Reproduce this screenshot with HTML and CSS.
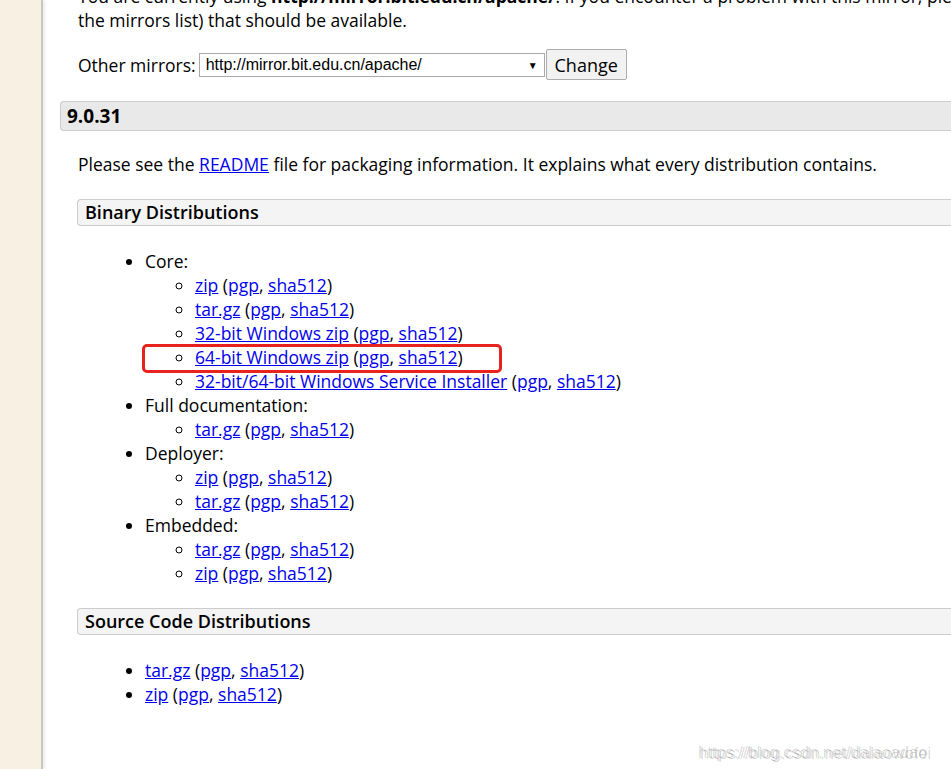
FILE: index.html
```html
<!DOCTYPE html>
<html lang="en">

<head>
    <meta charset="UTF-8">
    <meta name="viewport" content="width=device-width, initial-scale=1.0">
    <title>Apache Tomcat® - Apache Tomcat 9 Software Downloads</title>
    <link rel="stylesheet" href="styles.css">
</head>

<body>
    <div class="page">
        <div class="side"></div>
        <div class="content">
            <p class="intro">You are currently using <b>http://mirror.bit.edu.cn/apache/</b>. If you encounter a problem with this mirror, please select another mirror. If all mirrors are failing, there are <i>backup</i> mirrors (at the end of<br>the mirrors list) that should be available.</p>

            <form class="mirrors">
                <span>Other mirrors:</span>
                <div class="select-wrap">
                    <select>
                        <option>http://mirror.bit.edu.cn/apache/</option>
                    </select>
                </div>
                <input type="button" value="Change" class="btn">
            </form>

            <h3 class="version">9.0.31</h3>

            <div class="section">
                <p>Please see the <a href="#">README</a> file for packaging information. It explains what every distribution contains.</p>

                <h4 class="sub">Binary Distributions</h4>
                <ul class="dist">
                    <li>Core:
                        <ul>
                            <li><a href="#">zip</a> (<a href="#">pgp</a>, <a href="#">sha512</a>)</li>
                            <li><a href="#">tar.gz</a> (<a href="#">pgp</a>, <a href="#">sha512</a>)</li>
                            <li><a href="#">32-bit Windows zip</a> (<a href="#">pgp</a>, <a href="#">sha512</a>)</li>
                            <li class="marked"><a href="#">64-bit Windows zip</a> (<a href="#">pgp</a>, <a href="#">sha512</a>)</li>
                            <li><a href="#">32-bit/64-bit Windows Service Installer</a> (<a href="#">pgp</a>, <a href="#">sha512</a>)</li>
                        </ul>
                    </li>
                    <li>Full documentation:
                        <ul>
                            <li><a href="#">tar.gz</a> (<a href="#">pgp</a>, <a href="#">sha512</a>)</li>
                        </ul>
                    </li>
                    <li>Deployer:
                        <ul>
                            <li><a href="#">zip</a> (<a href="#">pgp</a>, <a href="#">sha512</a>)</li>
                            <li><a href="#">tar.gz</a> (<a href="#">pgp</a>, <a href="#">sha512</a>)</li>
                        </ul>
                    </li>
                    <li>Embedded:
                        <ul>
                            <li><a href="#">tar.gz</a> (<a href="#">pgp</a>, <a href="#">sha512</a>)</li>
                            <li><a href="#">zip</a> (<a href="#">pgp</a>, <a href="#">sha512</a>)</li>
                        </ul>
                    </li>
                </ul>

                <h4 class="sub">Source Code Distributions</h4>
                <ul class="dist">
                    <li><a href="#">tar.gz</a> (<a href="#">pgp</a>, <a href="#">sha512</a>)</li>
                    <li><a href="#">zip</a> (<a href="#">pgp</a>, <a href="#">sha512</a>)</li>
                </ul>
            </div>
        </div>
    </div>

    <!-- 水印 -->
    <div class="watermark">
        <span>https://blog.csdn.net/dalaoadao</span>
        <span class="second">https://blog.csdn.net/dalaowofei</span>
    </div>
</body>

</html>
```

FILE: styles.css
```css
body {
    margin: 0;
    padding: 0;
    background-color: #fff;
    font-family: "Open Sans", "Liberation Sans", sans-serif;
    font-size: 17.5px;
    line-height: 24px;
    color: #000;
    overflow: hidden;
}

a {
    color: #0000ee;
    text-decoration: underline;
}

.page {
    display: flex;
    min-height: 769px;
}

.side {
    width: 41px;
    flex-shrink: 0;
    background-color: #f8f0e3;
    border-right: 2px solid #cbc7c1;
    box-shadow: 2px 0 3px rgba(0, 0, 0, 0.08);
}

.content {
    flex: 1;
    padding-left: 17px;
    margin-top: -16px;
    min-width: 0;
}

.intro {
    margin: 0 0 17px 18px;
    white-space: nowrap;
}

.mirrors {
    display: flex;
    align-items: center;
    height: 31px;
    margin-left: 18px;
}

.mirrors span {
    margin-right: 3px;
}

.select-wrap {
    position: relative;
}

.select-wrap select {
    display: block;
    width: 346px;
    height: 24px;
    padding: 0 0 0 6px;
    border: 1px solid #a9a9a9;
    background-color: #fff;
    font-family: "Liberation Sans", Arial, sans-serif;
    font-size: 16px;
    color: #000;
    -webkit-appearance: none;
    appearance: none;
    outline: none;
}

.select-wrap::after {
    content: "\25BC";
    position: absolute;
    right: 7px;
    top: 6px;
    font-size: 10px;
    line-height: 12px;
    color: #000;
    pointer-events: none;
}

.btn {
    display: block;
    width: 81px;
    height: 31px;
    margin-left: 1px;
    padding: 0;
    border: 1px solid #adadad;
    border-radius: 2px;
    background-color: #f2f2f2;
    font-family: "Open Sans", sans-serif;
    font-size: 18px;
    color: #000;
}

.version {
    margin: 21px 0 0 0;
    height: 28px;
    padding-left: 6px;
    border: 1px solid #ccc;
    border-right: none;
    border-radius: 4px 0 0 4px;
    background-color: #e9e9e9;
    font-size: 19px;
    font-weight: 700;
    line-height: 28px;
}

.section {
    margin-left: 17px;
}

.section p {
    margin: 21px 0 0 1px;
}

.sub {
    margin: 23px 0 0 0;
    height: 25px;
    padding-left: 7px;
    border: 1px solid #ccc;
    border-right: none;
    border-radius: 4px 0 0 4px;
    background-color: #f4f4f4;
    font-size: 18px;
    font-weight: 600;
    line-height: 25px;
}

.dist {
    margin: 23px 0 23px 0;
    padding-left: 68px;
}

.sub + .dist {
    margin-top: 23px;
}

.dist ul {
    margin: 0;
    padding-left: 50px;
    list-style-type: circle;
}

.marked {
    position: relative;
}

.marked::before {
    content: "";
    position: absolute;
    left: -53px;
    top: -1px;
    width: 360px;
    height: 29px;
    box-sizing: border-box;
    border: 3px solid #e8231e;
    border-radius: 5px;
}

.watermark {
    position: absolute;
    left: 698px;
    top: 740px;
    font-family: "Liberation Sans", Arial, sans-serif;
    font-size: 16.5px;
    color: rgba(0, 0, 0, 0.16);
}

.watermark span {
    position: absolute;
    left: 0;
    top: 0;
    white-space: nowrap;
}

.watermark .second {
    left: 2px;
    top: 1px;
}
```
